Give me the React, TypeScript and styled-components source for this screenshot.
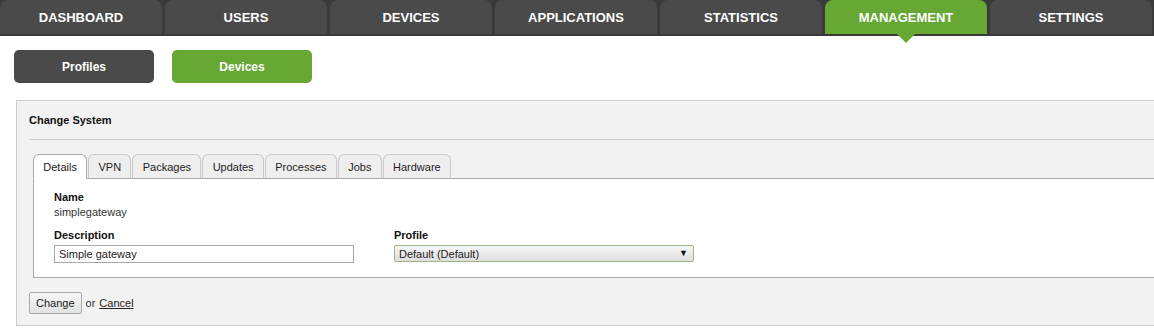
import React from "react";
import styled, { createGlobalStyle } from "styled-components";

const Global = createGlobalStyle`
  html, body { margin: 0; padding: 0; background: #fff; overflow: hidden; }
  body { font-family: "Liberation Sans", Arial, sans-serif; color: #222; }
`;

const Nav = styled.nav`
  display: flex;
  gap: 3px;
  background: #3a3a3a;
  padding-bottom: 2px;
`;

const NavTab = styled.div<{ $active?: boolean }>`
  position: relative;
  flex: 0 0 162px;
  height: 34px;
  display: flex;
  align-items: center;
  justify-content: center;
  border-radius: 8px 8px 0 0;
  background: ${(p) => (p.$active ? "#66a833" : "#4a4a4a")};
  color: #fff;
  font-weight: bold;
  font-size: 13px;
  text-transform: uppercase;
`;

const Pointer = styled.span`
  position: absolute;
  left: 50%;
  bottom: -9px;
  margin-left: -9px;
  width: 0;
  height: 0;
  border-left: 9px solid transparent;
  border-right: 9px solid transparent;
  border-top: 9px solid #66a833;
  z-index: 2;
`;

const SubNav = styled.div`
  display: flex;
  gap: 18px;
  padding: 14px 0 0 14px;
`;

const SubButton = styled.div<{ $active?: boolean }>`
  width: 140px;
  height: 33px;
  border-radius: 5px;
  display: flex;
  align-items: center;
  justify-content: center;
  background: ${(p) => (p.$active ? "#66a833" : "#4a4a4a")};
  color: #fff;
  font-weight: bold;
  font-size: 12px;
`;

const Panel = styled.section`
  margin: 17px 0 0 16px;
  background: #f2f2f2;
  border: 1px solid #cccccc;
  border-right: none;
  padding-left: 12px;
  padding-bottom: 11px;
`;

const PanelHeader = styled.h2`
  margin: 0;
  height: 38px;
  display: flex;
  align-items: center;
  font-size: 11px;
  font-weight: bold;
  color: #111;
  border-bottom: 1px solid #cccccc;
`;

const TabsArea = styled.div`
  margin: 14px 0 0 4px;
`;

const TabList = styled.div`
  display: flex;
  gap: 1px;
  margin-bottom: -1px;
  position: relative;
  z-index: 1;
`;

const Tab = styled.div<{ $active?: boolean }>`
  height: 23px;
  padding: 0 9.3px;
  display: flex;
  align-items: center;
  font-size: 11px;
  color: #222;
  border: 1px solid ${(p) => (p.$active ? "#aaaaaa" : "#c8c8c8")};
  border-bottom: 1px solid ${(p) => (p.$active ? "#ffffff" : "#aaaaaa")};
  border-radius: 6px 6px 0 0;
  background: ${(p) => (p.$active ? "#ffffff" : "#eeeeee")};
`;

const TabContent = styled.div`
  background: #fff;
  border: 1px solid #aaaaaa;
  border-right: none;
  padding: 11px 20px 14px 20px;
`;

const Label = styled.div`
  font-size: 11px;
  font-weight: bold;
  line-height: 14px;
  color: #111;
`;

const Value = styled.div`
  margin-top: 1px;
  font-size: 11px;
  line-height: 14px;
  color: #333;
`;

const FieldRow = styled.div`
  display: flex;
  align-items: flex-start;
  gap: 40px;
  margin-top: 9px;
`;

const Field = styled.div`
  display: flex;
  flex-direction: column;
  gap: 3px;
`;

const TextInput = styled.input`
  box-sizing: border-box;
  display: block;
  width: 300px;
  height: 18px;
  margin: 0;
  padding: 0 4px;
  border: 1px solid #a9a9a9;
  font-family: "Liberation Sans", Arial, sans-serif;
  font-size: 11px;
  color: #222;
  background: #fff;
  outline: none;
`;

const SelectWrap = styled.div`
  position: relative;
  width: 300px;
  height: 17px;
`;

const Select = styled.select`
  box-sizing: border-box;
  display: block;
  appearance: none;
  -webkit-appearance: none;
  width: 300px;
  height: 17px;
  margin: 0;
  padding: 0 4px;
  border: 1px solid #9db48c;
  border-radius: 2px;
  background: linear-gradient(#f7f7f7, #dedede);
  font-family: "Liberation Sans", Arial, sans-serif;
  font-size: 11px;
  color: #222;
  outline: none;
`;

const Arrow = styled.span`
  position: absolute;
  right: 6px;
  top: 2px;
  font-size: 9px;
  line-height: 13px;
  color: #111;
  pointer-events: none;
`;

const Footer = styled.div`
  display: flex;
  align-items: center;
  gap: 4px;
  margin-top: 14px;
  font-size: 11px;
  color: #333;
`;

const Button = styled.button`
  height: 22px;
  padding: 0 6px;
  margin: 0;
  border: 1px solid #a9a9a9;
  border-radius: 2px;
  background: linear-gradient(#f6f6f6, #e2e2e2);
  font-family: "Liberation Sans", Arial, sans-serif;
  font-size: 11px;
  color: #222;
`;

const Link = styled.a`
  color: #222;
  text-decoration: underline;
`;

const navItems = [
  "Dashboard",
  "Users",
  "Devices",
  "Applications",
  "Statistics",
  "Management",
  "Settings",
];

const tabs = ["Details", "VPN", "Packages", "Updates", "Processes", "Jobs", "Hardware"];

export default function App() {
  return (
    <>
      <Global />
      <Nav>
        {navItems.map((n) => (
          <NavTab key={n} $active={n === "Management"}>
            {n}
            {n === "Management" && <Pointer />}
          </NavTab>
        ))}
      </Nav>
      <SubNav>
        <SubButton>Profiles</SubButton>
        <SubButton $active>Devices</SubButton>
      </SubNav>
      <Panel>
        <PanelHeader>Change System</PanelHeader>
        <TabsArea>
          <TabList>
            {tabs.map((t) => (
              <Tab key={t} $active={t === "Details"}>
                {t}
              </Tab>
            ))}
          </TabList>
          <TabContent>
            <Label>Name</Label>
            <Value>simplegateway</Value>
            <FieldRow>
              <Field>
                <Label>Description</Label>
                <TextInput defaultValue="Simple gateway" />
              </Field>
              <Field>
                <Label>Profile</Label>
                <SelectWrap>
                  <Select defaultValue="default">
                    <option value="default">Default (Default)</option>
                  </Select>
                  <Arrow>▼</Arrow>
                </SelectWrap>
              </Field>
            </FieldRow>
          </TabContent>
        </TabsArea>
        <Footer>
          <Button>Change</Button>
          <span>or</span>
          <Link href="#">Cancel</Link>
        </Footer>
      </Panel>
    </>
  );
}
